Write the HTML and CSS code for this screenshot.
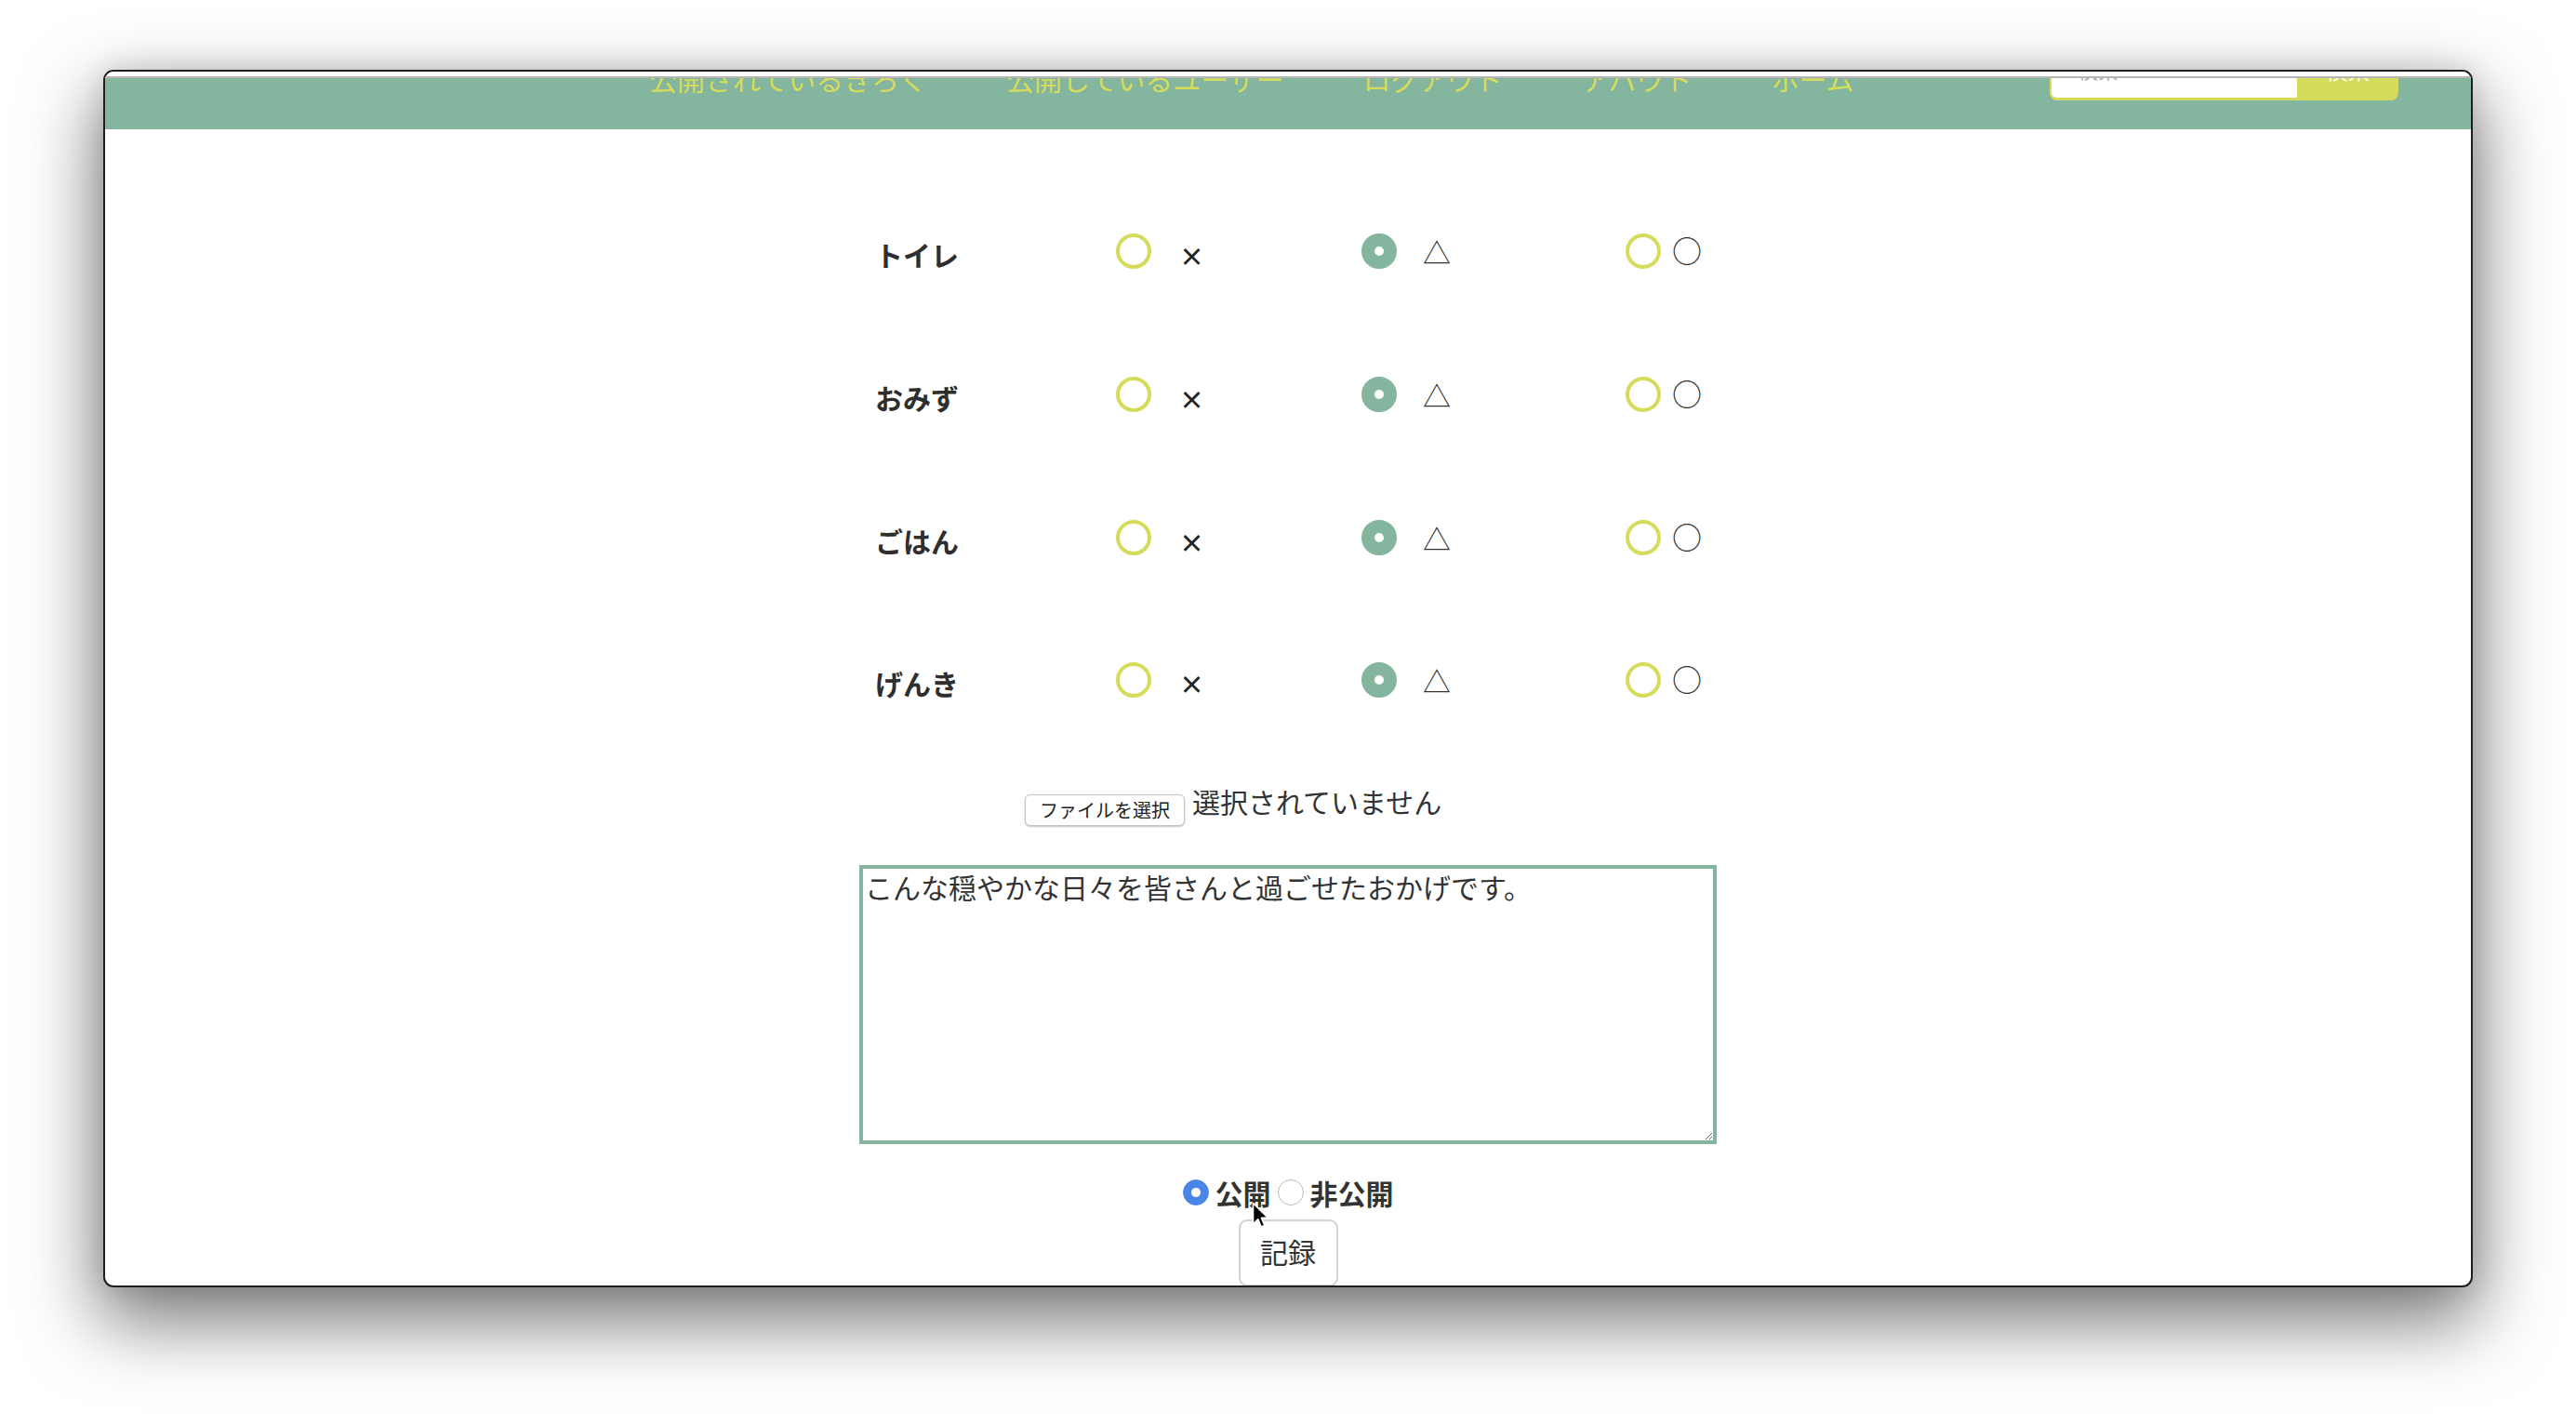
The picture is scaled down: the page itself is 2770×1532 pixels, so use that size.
FILE: index.html
```html
<!DOCTYPE html>
<html lang="ja">
<head>
<meta charset="utf-8">
<title>きろく</title>
<link rel="stylesheet" href="styles.css">
</head>
<body>
<div class="desktop">
  <div class="window">
    <div class="titlestrip"></div>
    <div class="viewport">
      <header class="site-header">
        <nav class="nav">
          <a class="nav-link">公開されているきろく</a>
          <a class="nav-link">公開しているユーザー</a>
          <a class="nav-link">ログアウト</a>
          <a class="nav-link">アバウト</a>
          <a class="nav-link">ホーム</a>
        </nav>
        <form class="search">
          <input class="search-input" type="text" placeholder="検索">
          <button class="search-btn" type="button">検索</button>
        </form>
      </header>
      <main class="main">
        <div class="ratings">
          <div class="label">トイレ</div>
          <label class="opt"><input class="radio" type="radio" name="toilet"><span class="sym x">×</span></label>
          <label class="opt"><input class="radio" type="radio" name="toilet" checked><span class="sym tri">△</span></label>
          <label class="opt"><input class="radio" type="radio" name="toilet"><span class="sym circ">○</span></label>

          <div class="label">おみず</div>
          <label class="opt"><input class="radio" type="radio" name="water"><span class="sym x">×</span></label>
          <label class="opt"><input class="radio" type="radio" name="water" checked><span class="sym tri">△</span></label>
          <label class="opt"><input class="radio" type="radio" name="water"><span class="sym circ">○</span></label>

          <div class="label">ごはん</div>
          <label class="opt"><input class="radio" type="radio" name="food"><span class="sym x">×</span></label>
          <label class="opt"><input class="radio" type="radio" name="food" checked><span class="sym tri">△</span></label>
          <label class="opt"><input class="radio" type="radio" name="food"><span class="sym circ">○</span></label>

          <div class="label">げんき</div>
          <label class="opt"><input class="radio" type="radio" name="health"><span class="sym x">×</span></label>
          <label class="opt"><input class="radio" type="radio" name="health" checked><span class="sym tri">△</span></label>
          <label class="opt"><input class="radio" type="radio" name="health"><span class="sym circ">○</span></label>
        </div>

        <div class="file-row">
          <span class="file-btn">ファイルを選択</span>
          <span class="file-name">選択されていません</span>
        </div>

        <textarea class="memo">こんな穏やかな日々を皆さんと過ごせたおかげです。</textarea>

        <div class="visibility">
          <input class="pub-radio" type="radio" name="visibility" checked>
          <span class="vis-label">公開</span>
          <input class="pub-radio" type="radio" name="visibility">
          <span class="vis-label">非公開</span>
        </div>

        <button class="submit" type="button">記録</button>
      </main>
    </div>
  </div>
  <svg class="cursor" width="20" height="30" viewBox="0 0 20 30" aria-hidden="true">
    <path d="M1.5 1.5 L1.5 24 L6.8 18.8 L10.2 27 L13.8 25.5 L10.4 17.4 L17.6 17.4 Z" fill="#000" stroke="#fff" stroke-width="1.6" stroke-linejoin="round"/>
  </svg>
</div>
</body>
</html>
```

FILE: styles.css
```css
* { box-sizing: border-box; }

html, body {
  margin: 0;
  background: #fff;
}

body {
  font-family: "Noto Sans CJK JP", "Noto Sans", sans-serif;
  color: #333;
}

.desktop {
  position: relative;
  width: 2770px;
  height: 1532px;
  padding: 75px 0 0 111px;
  overflow: hidden;
}

.window {
  width: 2548px;
  height: 1309px;
  border: 2px solid #1e1e1e;
  border-radius: 11px;
  background: #fff;
  overflow: hidden;
  display: flex;
  flex-direction: column;
  box-shadow: 0 32px 80px 6px rgba(0, 0, 0, 0.52), 0 0 30px rgba(0, 0, 0, 0.12);
}

.titlestrip {
  flex: none;
  height: 7px;
  background: #fff;
  border-bottom: 2px solid #b5b5b5;
}

.viewport {
  flex: 1;
  overflow: hidden;
}

/* header (scrolled partly out of view) */
.site-header {
  margin-top: -45px;
  height: 100px;
  background: #84b59f;
  display: flex;
  align-items: flex-start;
}

.nav {
  display: flex;
  gap: 85px;
  margin-left: 585px;
  padding-top: 30px;
}

.nav-link {
  font-size: 30px;
  line-height: 30px;
  color: #d5dc5b;
  white-space: nowrap;
}

.search {
  display: flex;
  margin: 9px 78px 0 auto;
  height: 60px;
}

.search-input {
  width: 266px;
  height: 60px;
  border: none;
  border-left: 2px solid #d5dc5b;
  border-bottom: 3px solid #d5dc5b;
  border-radius: 0 0 0 8px;
  background: #fff;
  font-family: inherit;
  font-size: 22px;
  padding: 0 0 6px 28px;
  color: #999;
  outline: none;
}

.search-input::placeholder { color: #aaa; }

.search-btn {
  width: 109px;
  height: 60px;
  border: none;
  background: #d5dc5b;
  color: #fff;
  font-family: inherit;
  font-size: 24px;
  padding-bottom: 8px;
  border-radius: 0 0 8px 0;
}

/* main form */
.main {
  display: flex;
  flex-direction: column;
  align-items: center;
  padding-top: 54px;
}

.ratings {
  display: grid;
  grid-template-columns: 259px 264px 284px 81px;
  grid-template-rows: 154px 154px 154px 151px;
  align-items: center;
}

.label {
  font-size: 30px;
  font-weight: 700;
  color: #2e2e2e;
  padding-top: 6px;
}

.opt {
  display: flex;
  align-items: center;
}

.radio {
  appearance: none;
  -webkit-appearance: none;
  flex: none;
  margin: 0;
  width: 38px;
  height: 38px;
  border-radius: 50%;
  border: 4px solid #d5dc5b;
  background: #fff;
}

.radio:checked {
  border: 14px solid #84b59f;
}

.sym { color: #333; line-height: 1; }

.sym.x {
  font-size: 27px;
  font-weight: 700;
  color: #222;
  margin-left: 30px;
  padding-top: 8px;
}

.sym.tri {
  font-size: 30px;
  margin-left: 28px;
}

.sym.circ {
  font-size: 32px;
  margin-left: 12px;
  padding-bottom: 4px;
}

.file-row {
  margin-top: 48px;
  width: 566px;
  height: 34px;
  display: flex;
  align-items: center;
}

.file-btn {
  height: 34px;
  padding: 0 15px;
  border: 1px solid #c4c4c4;
  border-radius: 6px;
  font-size: 20px;
  line-height: 32px;
  box-shadow: 0 1px 2px rgba(0, 0, 0, 0.25);
  background: #fff;
  color: #222;
  white-space: nowrap;
}

.file-name {
  font-size: 30px;
  margin-left: 8px;
  color: #333;
  white-space: nowrap;
  padding-bottom: 20px;
}

.memo {
  margin-top: 42px;
  width: 922px;
  height: 300px;
  border: 4px solid #84b59f;
  font-family: inherit;
  font-size: 30px;
  line-height: 1.3;
  color: #333;
  padding: 0 2px;
  outline: none;
  resize: both;
}

.visibility {
  margin-top: 32px;
  height: 40px;
  display: flex;
  align-items: center;
  gap: 7px;
}

.vis-label {
  font-size: 30px;
  font-weight: 700;
  color: #333;
}

.pub-radio {
  appearance: none;
  -webkit-appearance: none;
  margin: 0;
  width: 28px;
  height: 28px;
  border-radius: 50%;
  border: 1px solid #b9b9b9;
  background: #fff;
}

.pub-radio:checked {
  border-color: #4a86e8;
  background: radial-gradient(circle, #fff 0 4.5px, #4a86e8 5.5px);
}

.submit {
  margin-top: 9px;
  width: 107px;
  height: 72px;
  border: 2px solid #d3d3d3;
  border-radius: 9px;
  background: #fff;
  font-family: inherit;
  font-size: 30px;
  color: #333;
  padding-bottom: 6px;
}

.cursor {
  position: absolute;
  left: 1346px;
  top: 1292px;
}
```
